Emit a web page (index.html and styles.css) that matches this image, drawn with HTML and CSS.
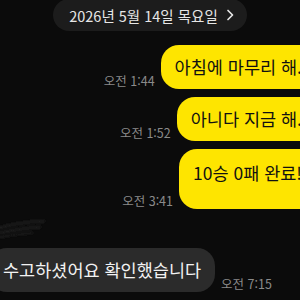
FILE: index.html
```
<!DOCTYPE html>
<html lang="ko">
<head>
  <meta charset="UTF-8" />
  <meta name="viewport" content="width=device-width, initial-scale=1.0"/>
  <title>Chat</title>
  <link rel="stylesheet" href="styles.css">
</head>
<body>

<div class="chat">
  <div class="date-row">
    <div class="date-pill">
      <span>2026년 5월 14일 목요일</span>
      <svg class="chevron" width="8" height="12" viewBox="0 0 8 12"><path d="M2 1.5 L6.5 6 L2 10.5" fill="none" stroke="#e6e6e6" stroke-width="1.7" stroke-linecap="round" stroke-linejoin="round"/></svg>
    </div>
  </div>

  <div class="msg me">
    <span class="time">오전 1:44</span>
    <div class="bubble">아침에 마무리 해.</div>
  </div>

  <div class="msg me">
    <span class="time">오전 1:52</span>
    <div class="bubble">아니다 지금 해.</div>
  </div>

  <div class="msg me">
    <span class="time">오전 3:41</span>
    <div class="bubble tall">10승 0패 완료!</div>
  </div>

  <!-- sender name scribbled out -->
  <div class="sender">
    <svg width="60" height="26" viewBox="0 0 60 26">
      <defs><filter id="soft"><feGaussianBlur stdDeviation="1"/></filter></defs>
      <g filter="url(#soft)" stroke="#1d1d1d" stroke-linecap="round" fill="none">
        <path d="M-4 13 C10 8, 25 6, 44 5" stroke-width="3"/>
        <path d="M-4 18 C12 14, 26 12, 40 11" stroke-width="3"/>
        <path d="M-2 22 C10 19, 20 18, 32 17" stroke-width="2"/>
      </g>
    </svg>
  </div>

  <div class="msg them">
    <div class="bubble">수고하셨어요 확인했습니다</div>
    <span class="time">오전 7:15</span>
  </div>
</div>

</body>
</html>
```
FILE: styles.css
```
html, body {
    margin: 0;
    padding: 0;
    width: 100%;
    height: 100%;
    background: #0b0b0b;
    font-family: 'Noto Sans CJK KR', 'Noto Sans', sans-serif;
    overflow: hidden;
}

.chat {
    display: flex;
    flex-direction: column;
}

.date-row {
    display: flex;
    justify-content: center;
    margin-top: -1px;
}
.date-pill {
    display: flex;
    align-items: center;
    gap: 8px;
    height: 32px;
    padding: 0 13px 0 16px;
    border-radius: 16px;
    background: #1c1c1c;
    color: #e6e6e6;
    font-size: 14.5px;
}

.msg {
    display: flex;
    align-items: flex-end;
    gap: 6px;
}
.msg.me {
    justify-content: flex-end;
    margin-top: 8px;
    margin-right: -16px;
}
.date-row + .msg.me { margin-top: 14px; }

.msg.them {
    margin-left: -11px;
}

.bubble {
    padding: 11px 14px;
    border-radius: 18px;
    font-size: 17.5px;
    line-height: 22px;
    white-space: nowrap;
}
.me .bubble {
    background: #fee500;
    color: #111;
}
.them .bubble {
    background: #2b2b2b;
    color: #f2f2f2;
}
.bubble.tall {
    padding-top: 13px;
    padding-bottom: 25px;
}

.time {
    font-size: 12.5px;
    color: #8a8a8a;
    line-height: 14px;
    margin-bottom: 1px;
    white-space: nowrap;
}

.sender {
    height: 39px;
    display: flex;
    align-items: center;
}
.sender svg { display: block; }
```
